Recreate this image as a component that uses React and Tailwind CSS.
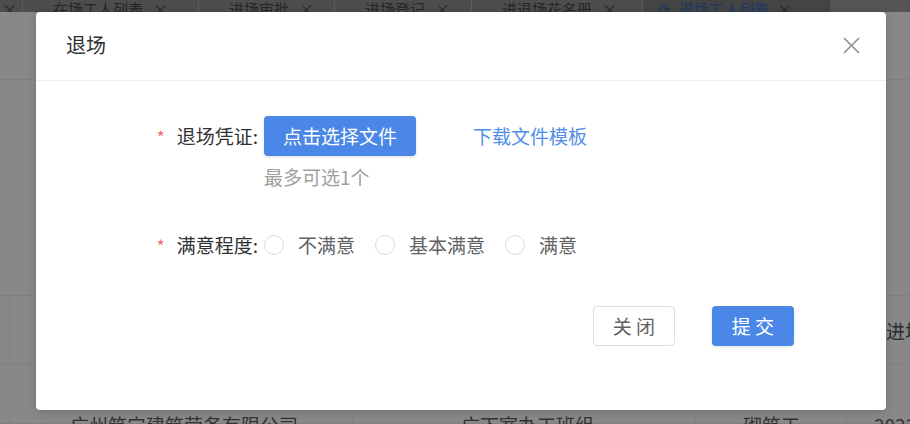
import { useState } from 'react'

const tabs = [
  { label: '在场工人列表', w: 'w-[176px]' },
  { label: '进场审批', w: 'w-[136px]' },
  { label: '进场登记', w: 'w-[137px]' },
  { label: '进退场花名册', w: 'w-[171px]' },
]

function Radio({ label }) {
  return (
    <label className="flex items-center gap-[14px] cursor-pointer">
      <span className="w-[20px] h-[20px] rounded-full border border-[#d9d9d9] bg-white" />
      <span className="text-[#606266]">{label}</span>
    </label>
  )
}

export default function App() {
  const [level, setLevel] = useState(null)

  return (
    <div
      className="relative w-[910px] h-[424px] overflow-hidden bg-[#888888]"
      style={{ fontFamily: '"Noto Sans CJK SC", "Noto Sans", sans-serif' }}
    >
      {/* dimmed page behind the dialog */}
      <div className="flex flex-col">
        <div className="flex h-[12px] overflow-hidden bg-[#4d4d4d] text-[15px] leading-[18px] text-[#262626]">
          <div className="w-[23px] shrink-0 border-r border-[#5c5c5c] pl-[2px]">×</div>
          {tabs.map((t) => (
            <div key={t.label} className={`${t.w} shrink-0 flex gap-[10px] pl-[30px] border-r border-[#5c5c5c]`}>
              <span>{t.label}</span>
              <span>×</span>
            </div>
          ))}
          <div className="w-[187px] shrink-0 flex items-start gap-[8px] pl-[15px] bg-[#444] text-[#1e3766]">
            <span>⟳</span>
            <span>退场工人列表</span>
            <span className="text-[#262626]">×</span>
          </div>
          <div className="flex-1 bg-[#555]" />
        </div>
        <div className="h-[68px] border-b border-[#808080]" />
        <div className="h-[215px]" />
        <div className="flex h-[69px] border-y border-[#808080] text-[19px] text-[#2b2b2b]">
          <div className="w-[10px] shrink-0 border-r border-[#808080]" />
          <div className="w-[876px] shrink-0" />
          <div className="flex items-center whitespace-nowrap pt-[4px]">进场</div>
        </div>
        <div className="flex h-[60px] border-b border-[#808080] text-[19px] text-[#333] leading-[24px] pt-[49px]">
          <div className="w-[10px] shrink-0 border-r border-[#808080]" />
          <div className="w-[343px] shrink-0 border-r border-[#808080] pl-[60px] whitespace-nowrap">广州筑宁建筑劳务有限公司</div>
          <div className="w-[343px] shrink-0 border-r border-[#808080] pl-[108px] whitespace-nowrap">广下室办工班组</div>
          <div className="w-[151px] shrink-0 border-r border-[#808080] pl-[47px] whitespace-nowrap">砌筑工</div>
          <div className="flex-1 pl-[27px]">2022</div>
        </div>
      </div>

      {/* dialog */}
      <div className="absolute left-[36px] top-[12px] w-[850px] h-[398px] bg-white rounded-[4px] shadow-[0_2px_10px_rgba(0,0,0,0.15)] flex flex-col">
        <div className="h-[69px] flex items-center justify-between border-b border-[#ebeef5] pl-[30px] pr-[26px]">
          <span className="text-[20px] text-[#303133] mt-[-2px]">退场</span>
          <svg width="17" height="17" viewBox="0 0 17 17" className="mt-[-2px]">
            <path d="M1 1 L16 16 M16 1 L1 16" stroke="#8c8c8c" strokeWidth="1.5" fill="none" />
          </svg>
        </div>

        <div className="flex flex-col pt-[35px] text-[19px] leading-[24px]">
          <div className="flex">
            <div className="w-[222px] h-[40px] flex items-center justify-end text-[#303133]">
              <span className="text-[#f56c6c] text-[17px] mr-[12px] mt-[2px]">*</span>
              <span>退场凭证:</span>
            </div>
            <div className="ml-[6px] flex flex-col">
              <div className="flex items-center">
                <button className="w-[152px] h-[40px] rounded-[4px] bg-[#4a87e6] text-white text-[19px] shadow-[0_1px_3px_rgba(0,0,0,0.12)]">
                  点击选择文件
                </button>
                <a className="ml-[57px] text-[#4f8ee9] cursor-pointer">下载文件模板</a>
              </div>
              <div className="mt-[9px] text-[#a0a0a0]">最多可选1个</div>
            </div>
          </div>

          <div className="flex mt-[43px] items-center">
            <div className="w-[222px] flex items-center justify-end text-[#303133]">
              <span className="text-[#f56c6c] text-[17px] mr-[12px] mt-[2px]">*</span>
              <span>满意程度:</span>
            </div>
            <div className="ml-[6px] flex items-center gap-[20px]" onClick={() => setLevel(level)}>
              <Radio label="不满意" />
              <Radio label="基本满意" />
              <Radio label="满意" />
            </div>
          </div>

          <div className="flex justify-end gap-[37px] pr-[92px] mt-[48px]">
            <button className="w-[82px] h-[40px] rounded-[4px] border border-[#dcdfe6] bg-white text-[#606266] text-[19px]">
              关 闭
            </button>
            <button className="w-[82px] h-[40px] rounded-[4px] bg-[#4a87e6] text-white text-[19px] shadow-[0_1px_3px_rgba(0,0,0,0.12)]">
              提 交
            </button>
          </div>
        </div>
      </div>
    </div>
  )
}
